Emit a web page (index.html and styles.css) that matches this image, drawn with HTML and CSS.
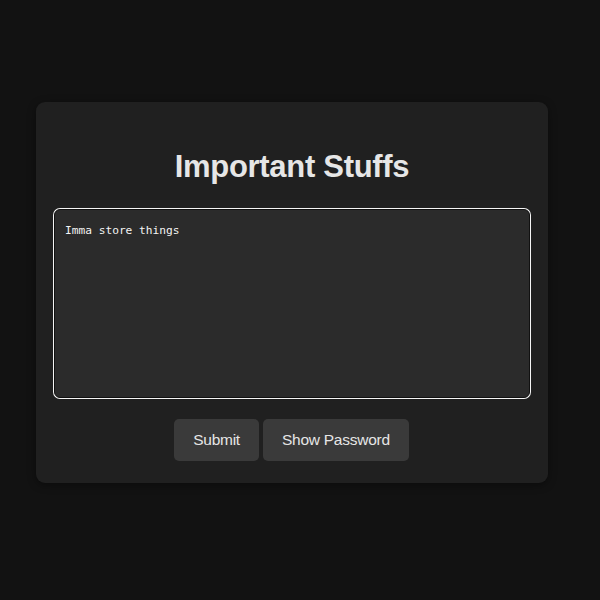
FILE: index.html
```html
<!DOCTYPE html>
<html>
<head>
<meta charset="utf-8">
<link rel="stylesheet" href="styles.css">
</head>
<body>
<div class="card">
  <h1 class="title">Important Stuffs</h1>
  <textarea class="notes" autofocus>Imma store things</textarea>
  <div class="actions">
    <button class="btn">Submit</button>
    <button class="btn">Show Password</button>
  </div>
</div>
</body>
</html>
```
FILE: styles.css
```css
html, body {
  margin: 0;
  padding: 0;
  background: #121212;
  height: 100%;
}
body {
  font-family: "Liberation Sans", Arial, sans-serif;
  color: #e0e0e0;
  padding-top: 102px;
  box-sizing: border-box;
}
.card {
  width: 512px;
  margin-left: 36px;
  box-sizing: border-box;
  background: #202020;
  border-radius: 9px;
  padding: 45px 17px 22px;
  box-shadow: 0 2px 8px rgba(0,0,0,0.4);
}
.title {
  margin: 0 0 22px;
  text-align: center;
  font-size: 31px;
  font-weight: bold;
  line-height: 40px;
  color: #e6e6e6;
  letter-spacing: -0.3px;
}
.notes {
  display: block;
  width: 476px;
  height: 189px;
  box-sizing: border-box;
  margin: 1px 1px;
  padding: 14px 10px;
  background: #2b2b2b;
  color: #f4f4f4;
  border: 1px solid #111;
  border-radius: 6px;
  outline: none;
  box-shadow: 0 0 0 1px #f5f5f5;
  font-family: "DejaVu Sans Mono", monospace;
  font-size: 11.2px;
  line-height: 14px;
  resize: none;
}
.actions {
  display: flex;
  justify-content: center;
  gap: 4px;
  margin-top: 21px;
  padding-right: 1px;
}
.btn {
  background: #3a3a3a;
  color: #e6e6e6;
  border: none;
  border-radius: 5px;
  padding: 12px 19px;
  font-family: "Liberation Sans", Arial, sans-serif;
  font-size: 15.5px;
  line-height: 18px;
  letter-spacing: -0.25px;
}
```
